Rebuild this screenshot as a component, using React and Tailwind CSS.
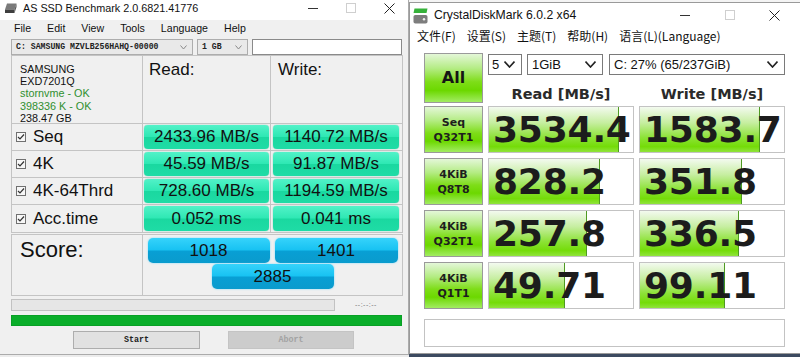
const LS = "font-['Liberation_Sans',Arial,sans-serif]";
const MONO = "font-['Liberation_Mono',monospace]";
const DV = "font-['DejaVu_Sans',Verdana,sans-serif]";
const CJK = "font-['Noto_Sans_CJK_SC','Noto_Sans',sans-serif]";

function Chevron({ w = 9, h = 5, color = "#333", sw = 1.3 }) {
  return (
    <svg width={w} height={h + 1} viewBox={`0 0 ${w} ${h + 1}`}>
      <polyline points={`0.5,0.5 ${w / 2},${h} ${w - 0.5},0.5`} fill="none" stroke={color} strokeWidth={sw} />
    </svg>
  );
}

function Controls({ cell, dis = "#cfcfcf" }) {
  return (
    <div className="flex h-full">
      <div className={`${cell} flex items-center justify-center`}>
        <div className="w-[10px] h-px bg-[#333]" />
      </div>
      <div className={`${cell} flex items-center justify-center`}>
        <div className="w-[10px] h-[10px] border" style={{ borderColor: dis }} />
      </div>
      <div className={`${cell} flex items-center justify-center`}>
        <svg width="11" height="11" viewBox="0 0 11 11">
          <path d="M0.5 0.5 L10.5 10.5 M10.5 0.5 L0.5 10.5" stroke="#222" strokeWidth="1" />
        </svg>
      </div>
    </div>
  );
}

function CheckBox() {
  return (
    <svg width="10" height="10" viewBox="0 0 10 10" className="shrink-0">
      <rect x="0.5" y="0.5" width="9" height="9" fill="#f7f7f7" stroke="#707070" />
      <path d="M2 5 L4 7 L8 2.5" fill="none" stroke="#333" strokeWidth="1.2" />
    </svg>
  );
}

const mintBox =
  "rounded-[4px] bg-[linear-gradient(180deg,#52f2c8_0%,#2fe8b4_48%,#1ad8a0_52%,#1fdca6_100%)] shadow-[0_0_1px_#0fb585]";
const blueBox =
  "rounded-[5px] bg-[linear-gradient(180deg,#36d3fb_0%,#18c2f2_48%,#089fd4_52%,#0a9bcd_100%)] shadow-[0_0_2px_#6fd8ff]";

function LeftWin() {
  const rows = [
    ["Seq", "2433.96 MB/s", "1140.72 MB/s"],
    ["4K", "45.59 MB/s", "91.87 MB/s"],
    ["4K-64Thrd", "728.60 MB/s", "1194.59 MB/s"],
    ["Acc.time", "0.052 ms", "0.041 ms"],
  ];
  return (
    <div className={`w-[409px] h-[355px] shrink-0 flex flex-col bg-[#f0f0f0] border-r border-b border-[#ababab] ${LS}`}>
      <div className="h-[20px] bg-white flex items-start">
        <div className="pl-[4px] pt-[3px]">
          <svg width="13" height="11" viewBox="0 0 13 11">
            <path d="M3 0.5 H12.5 L10.5 6.5 H1 Z" fill="#7a7a7a" />
            <path d="M1 6.5 H10.5 V10 H1 Z" fill="#3f3f3f" />
            <path d="M10.5 6.5 L12.5 0.5 V4 L10.5 10 Z" fill="#555" />
          </svg>
        </div>
        <div className="ml-[6px] text-[10.8px] leading-[16px] text-[#111]">AS SSD Benchmark 2.0.6821.41776</div>
        <div className="ml-auto h-[16px]">
          <Controls cell="w-[38px]" />
        </div>
      </div>
      <div className="h-[18px] flex items-center pl-[6px] text-[10.6px] text-[#111]">
        {["File", "Edit", "View", "Tools", "Language", "Help"].map((m) => (
          <span key={m} className="px-[8px]">{m}</span>
        ))}
      </div>
      <div className="h-[17px] flex items-start pl-[11px] pt-[1px] gap-[4px]">
        <div className={`w-[182px] h-[16px] border border-[#adadad] bg-[#e9e9e9] flex items-center pl-[4px] pr-[5px] ${MONO} font-bold text-[8.2px] text-[#222]`}>
          <span>C: SAMSUNG MZVLB256HAHQ-00000</span>
          <span className="ml-auto"><Chevron w={7} h={4} color="#888" sw={1} /></span>
        </div>
        <div className={`w-[51px] h-[16px] border border-[#adadad] bg-[#e9e9e9] flex items-center pl-[4px] pr-[5px] ${MONO} font-bold text-[8.2px] text-[#222]`}>
          <span>1 GB</span>
          <span className="ml-auto"><Chevron w={7} h={4} color="#888" sw={1} /></span>
        </div>
        <div className="w-[150px] h-[16px] border border-[#8a8a8a] bg-white" />
      </div>
      <div className="ml-[11px] w-[392px] border border-[#c4c4c4] flex flex-col text-[#111]">
        <div className="h-[68px] flex border-b border-[#c4c4c4]">
          <div className="w-[131px] border-r border-[#c4c4c4] pl-[8px] pt-[7px] text-[10.8px] leading-[12.2px]">
            <div>SAMSUNG</div>
            <div>EXD7201Q</div>
            <div className="text-[#2f8f2f]">stornvme - OK</div>
            <div className="text-[#2f8f2f]">398336 K - OK</div>
            <div>238.47 GB</div>
          </div>
          <div className="w-[128px] border-r border-[#c4c4c4] pl-[6px] pt-[4px] text-[17px] leading-[20px]">Read:</div>
          <div className="flex-1 pl-[7px] pt-[4px] text-[17px] leading-[20px]">Write:</div>
        </div>
        {rows.map(([l, r, w], i) => (
          <div key={l} className={`h-[27px] flex ${i < 3 ? "border-b border-[#c4c4c4]" : ""}`}>
            <div className="w-[131px] border-r border-[#c4c4c4] flex items-center pl-[4px] gap-[7px] text-[17px]">
              <CheckBox />
              <span>{l}</span>
            </div>
            <div className="w-[128px] border-r border-[#c4c4c4] px-[1px] py-[1px] flex">
              <div className={`flex-1 ${mintBox} flex items-center justify-center text-[17px]`}>{r}</div>
            </div>
            <div className="flex-1 pl-[2px] pr-[3px] py-[1px] flex">
              <div className={`flex-1 ${mintBox} flex items-center justify-center text-[17px]`}>{w}</div>
            </div>
          </div>
        ))}
      </div>
      <div className="ml-[11px] mt-[1px] w-[392px] h-[62px] border border-[#c4c4c4] flex text-[#111]">
        <div className="w-[131px] border-r border-[#c4c4c4] pl-[8px] pt-[2px] text-[22px] leading-[26px]">Score:</div>
        <div className="flex-1 flex flex-col items-center pt-[3px] gap-[1px]">
          <div className="flex gap-[5px]">
            <div className={`w-[122px] h-[25px] ${blueBox} flex items-center justify-center text-[17px]`}>1018</div>
            <div className={`w-[123px] h-[25px] ${blueBox} flex items-center justify-center text-[17px]`}>1401</div>
          </div>
          <div className={`w-[122px] h-[25px] ${blueBox} flex items-center justify-center text-[17px]`}>2885</div>
        </div>
      </div>
      <div className="ml-[11px] mt-[3px] flex items-center">
        <div className="w-[324px] h-[12px] border border-[#c2c2c2] bg-[#e6e6e6]" />
        <div className="ml-[20px] text-[7px] text-[#777] tracking-[0.5px]">--:--:--</div>
      </div>
      <div className="ml-[11px] mt-[4px] w-[391px] h-[11px] bg-[#0aae2a] border border-[#08a025]" />
      <div className="mt-[5px] flex pl-[73px] gap-[28px]">
        <div className={`w-[127px] h-[18px] border border-[#adadad] bg-[#e1e1e1] flex items-center justify-center ${MONO} font-bold text-[8.4px] text-[#222]`}>Start</div>
        <div className={`w-[126px] h-[18px] border border-[#c4c4c4] bg-[#cccccc] flex items-center justify-center ${MONO} font-bold text-[8.4px] text-[#a3a3a3]`}>Abort</div>
      </div>
    </div>
  );
}

const greenBtn =
  "border border-[#9a9a9a] bg-[linear-gradient(180deg,#e4f7d8_0%,#b4ec84_30%,#7edd18_58%,#6cd800_76%,#a2ec62_100%)]";
const barFill =
  "bg-[linear-gradient(180deg,#f3faef_0%,#c6eea0_35%,#8ce236_68%,#74dc08_88%,#90e43c_100%)]";

function Select({ w, text, pad = "pl-[4px]" }) {
  return (
    <div className={`h-[21px] border border-[#7a7a7a] bg-white flex items-center ${pad} pr-[6px] ${LS} text-[13px] text-[#111]`} style={{ width: w }}>
      <span>{text}</span>
      <span className="ml-auto"><Chevron w={11} h={6} color="#222" sw={1.6} /></span>
    </div>
  );
}

function ValueCell({ v, p }) {
  return (
    <div className="relative w-[146px] h-[47px] border border-[#c3c3c3] bg-white overflow-hidden">
      <div className={`absolute left-0 top-0 bottom-0 ${barFill} border-r border-[#4f9a22]`} style={{ width: `${p}%` }} />
      <div className={`relative h-full flex items-center pl-[4px] ${DV} font-bold text-[36px] leading-none text-[#1c1c1c] tracking-[-0.2px]`}>{v}</div>
    </div>
  );
}

function RightWin() {
  const rows = [
    ["Seq", "Q32T1", "3534.4", 90, "1583.7", 83],
    ["4KiB", "Q8T8", "828.2", 77, "351.8", 71],
    ["4KiB", "Q32T1", "257.8", 68, "336.5", 69],
    ["4KiB", "Q1T1", "49.71", 53, "99.11", 59],
  ];
  return (
    <div className="flex-1 flex flex-col bg-[#3c4a60]">
      <div className="h-[2px] bg-[#f4f4f4]" />
      <div className="h-[352px] bg-white border-l border-t border-b border-[#9a9a9a] flex flex-col">
        <div className="h-[24px] flex items-center">
          <div className="pl-[3px] pt-[1px]">
            <svg width="15" height="16" viewBox="0 0 15 16">
              <path d="M1.5 0.5 H14.5 L13.5 5 H0.5 Z" fill="#36b23a" />
              <rect x="0.5" y="7" width="14" height="8.5" rx="1.8" fill="#7d7d7d" />
              <circle cx="11" cy="11.2" r="1.2" fill="#f2f2f2" />
            </svg>
          </div>
          <div className={`ml-[6px] ${LS} text-[12.2px] text-[#111]`}>CrystalDiskMark 6.0.2 x64</div>
          <div className="ml-auto h-full pr-[3px]">
            <Controls cell="w-[45px]" />
          </div>
        </div>
        <div className={`h-[18px] flex items-center pl-[7px] gap-[11px] ${CJK} text-[12px] text-[#111]`}>
          {["文件(F)", "设置(S)", "主题(T)", "帮助(H)", "语言(L)(Language)"].map((m) => (
            <span key={m}>{m}</span>
          ))}
        </div>
        <div className="pl-[14px] pt-[8px] flex flex-col">
          <div className="flex gap-[5px] h-[50px]">
            <div className={`w-[59px] h-[50px] ${greenBtn} flex items-center justify-center ${DV} font-bold text-[16px] text-[#151515]`}>All</div>
            <div className="flex flex-col w-[297px]">
              <div className="flex mt-[1px]">
                <Select w="34px" text="5" pad="pl-[3px]" />
                <div className="ml-[5px]"><Select w="76px" text="1GiB" /></div>
                <div className="ml-[6px]"><Select w="176px" text="C: 27% (65/237GiB)" /></div>
              </div>
              <div className={`flex-1 flex gap-[5px] pt-[9px] ${DV} font-bold text-[14.5px] text-[#2a2a2a]`}>
                <div className="w-[146px] flex items-center justify-center">Read [MB/s]</div>
                <div className="w-[146px] flex items-center justify-center">Write [MB/s]</div>
              </div>
            </div>
          </div>
          <div className="mt-[3px] flex flex-col gap-[5px]">
            {rows.map(([a, b, r, rp, w, wp], i) => (
              <div key={i} className="flex gap-[5px]">
                <div className={`w-[59px] h-[47px] ${greenBtn} flex flex-col items-center justify-center ${DV} font-bold text-[11px] leading-[15px] text-[#1e1e1e]`}>
                  <span>{a}</span>
                  <span>{b}</span>
                </div>
                <ValueCell v={r} p={rp} />
                <ValueCell v={w} p={wp} />
              </div>
            ))}
          </div>
          <div className="mt-[10px] w-[361px] h-[28px] border border-[#c3c3c3] bg-white" />
        </div>
      </div>
    </div>
  );
}

export default function App() {
  return (
    <div className="w-[800px] h-[357px] flex overflow-hidden bg-[#ececec]">
      <LeftWin />
      <RightWin />
    </div>
  );
}
